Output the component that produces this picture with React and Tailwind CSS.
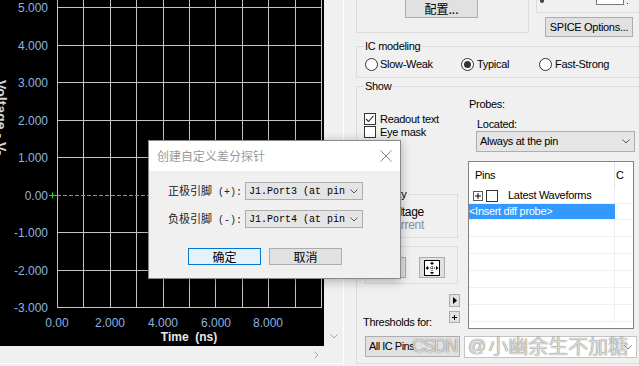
import React from "react";

const gridX = [57, 83, 110, 136, 163, 189, 215, 242, 268, 295, 321];
const gridY = [7, 45, 82, 120, 157, 232, 270, 307];
const yLabels = [
  [7, "5.000"],
  [45, "4.000"],
  [82, "3.000"],
  [120, "2.000"],
  [157, "1.000"],
  [195, "0.00"],
  [232, "-1.000"],
  [270, "-2.000"],
  [307, "-3.000"],
];
const xLabels = [
  [57, "0.00"],
  [110, "2.000"],
  [163, "4.000"],
  [216, "6.000"],
  [268, "8.000"],
];
const emptyRows = [1, 2, 3, 4, 5, 6];

function Chevron({ color = "#555", className = "" }) {
  return (
    <svg width="8" height="5" viewBox="0 0 8 5" className={className}>
      <path d="M0.5 0.5L4 4L7.5 0.5" fill="none" stroke={color} />
    </svg>
  );
}

function Radio({ checked, dim }) {
  return (
    <span
      className={`w-[13px] h-[13px] rounded-full border bg-white flex items-center justify-center shrink-0 ${
        dim ? "border-[#9a9a9a]" : "border-[#333]"
      }`}
    >
      {checked && <span className="w-[7px] h-[7px] rounded-full bg-[#333]" />}
    </span>
  );
}

function Check({ checked }) {
  return (
    <span className="w-[12px] h-[12px] border border-[#333] bg-white shrink-0 flex">
      {checked && (
        <svg width="10" height="10" viewBox="0 0 10 10">
          <path d="M1 5l2.5 2.5L8.5 1.8" fill="none" stroke="#333" strokeWidth="1.1" />
        </svg>
      )}
    </span>
  );
}

function Group({ label, labelLeft = "left-[7px]", className = "", children }) {
  return (
    <div className={`relative border border-[#dcdcdc] shrink-0 ${className}`}>
      {label && (
        <span className={`absolute -top-[8px] ${labelLeft} px-px bg-[#f0f0f0] leading-[14px] whitespace-nowrap`}>
          {label}
        </span>
      )}
      {children}
    </div>
  );
}

function Chart() {
  return (
    <svg
      width="324"
      height="346"
      className="block bg-black shrink-0"
      fontFamily="Liberation Sans, sans-serif"
      style={{ letterSpacing: 0 }}
    >
      {gridX.map((x) => (
        <line key={x} x1={x + 0.5} y1="0" x2={x + 0.5} y2="308" stroke="#c4c4c4" />
      ))}
      {gridY.map((y) => (
        <line key={y} x1="57" y1={y + 0.5} x2="322" y2={y + 0.5} stroke="#c4c4c4" />
      ))}
      <line x1="57" y1="195.5" x2="322" y2="195.5" stroke="#1ee61e" strokeDasharray="4 2" />
      <path d="M49 195.5H57M52.5 192.5V198.5" stroke="#1ee61e" />
      <g fill="#8db3e2" fontSize="12">
        {yLabels.map(([y, t]) => (
          <text key={t} x="48" y={y + 5} textAnchor="end">
            {t}
          </text>
        ))}
        {xLabels.map(([x, t]) => (
          <text key={t} x={x} y="326.5" textAnchor="middle">
            {t}
          </text>
        ))}
      </g>
      <text
        x="189"
        y="341"
        textAnchor="middle"
        fontSize="12"
        fontWeight="bold"
        fill="#e8e8e8"
        style={{ whiteSpace: "pre" }}
      >
        Time  (ns)
      </text>
      <text
        transform="translate(-4 80) rotate(90)"
        fontSize="14"
        fontWeight="bold"
        fill="#d4d4d4"
      >
        Voltage - V-
      </text>
    </svg>
  );
}

function FitIcon() {
  return (
    <svg width="16" height="16" viewBox="0 0 16 16">
      <rect x="0.5" y="0.5" width="15" height="15" fill="white" stroke="black" />
      <path d="M8 4V12M4 8H12" stroke="black" strokeDasharray="1 1" />
      <path d="M8 1.5L10 4H6Z M8 14.5L10 12H6Z M1.5 8L4 6V10Z M14.5 8L12 6V10Z" fill="black" />
    </svg>
  );
}

export default function App() {
  return (
    <div className="relative w-[639px] h-[366px] overflow-hidden bg-[#f0f0f0] flex font-['Liberation_Sans',sans-serif] text-[11px] tracking-[-0.3px] text-black">
      {/* Scope plot + scrollbars */}
      <div className="w-[343px] shrink-0 flex flex-col">
        <div className="flex h-[346px]">
          <Chart />
          <div className="w-[19px] flex flex-col justify-end items-center pb-[7px]">
            <Chevron color="#a6a6a6" />
          </div>
        </div>
        <div className="h-[18px] border-b border-white flex items-center justify-start pl-[314px]">
          <svg width="5" height="8" viewBox="0 0 5 8">
            <path d="M0.5 0.5L4 4L0.5 7.5" fill="none" stroke="#a6a6a6" />
          </svg>
        </div>
      </div>

      {/* Settings panel */}
      <div className="w-[296px] shrink-0 border-l border-white pl-[12px] flex flex-col overflow-hidden">
        <div className="h-[40px] flex items-start shrink-0">
          <div className="w-[173px] h-[33px] border-x border-b border-[#dcdcdc] flex items-start shrink-0">
            <button className="ml-[48px] -mt-px w-[73px] h-[19px] border border-[#adadad] bg-[#e1e1e1] text-[12px] font-['Noto_Sans_CJK_SC',sans-serif] tracking-normal leading-[16px]">
              配置...
            </button>
          </div>
          <div className="ml-[7px] flex flex-col shrink-0">
            <div className="h-[13px] w-[120px] border-l border-b border-[#dcdcdc] flex items-start">
              <span className="ml-[3px] w-[4px] h-[3px] rounded-b-full bg-[#444]" />
              <span className="ml-[52px] -mt-px w-[28px] h-[6px] border border-[#7a7a7a] bg-white" />
              <span className="ml-[3px] mt-[3px] w-[1px] h-[1px] bg-[#333]" />
            </div>
            <button className="mt-[4px] ml-[9px] w-[88px] h-[20px] border border-[#adadad] bg-[#e1e1e1] leading-[18px] whitespace-nowrap">
              SPICE Options...
            </button>
          </div>
        </div>

        <Group label="IC modeling" className="mt-[6px] h-[32px] w-[300px]">
          <div className="mt-[9px] pl-[8px] flex items-center">
            <div className="w-[96px] flex items-center shrink-0">
              <Radio />
              <span className="ml-[2px]">Slow-Weak</span>
            </div>
            <div className="w-[78px] flex items-center shrink-0">
              <Radio checked />
              <span className="ml-[3px]">Typical</span>
            </div>
            <div className="flex items-center shrink-0">
              <Radio />
              <span className="ml-[3px]">Fast-Strong</span>
            </div>
          </div>
        </Group>

        <Group label="Show" className="mt-[8px] h-[278px] w-[300px] flex flex-col">
          <div className="flex h-[242px] shrink-0">
            <div className="w-[111px] flex flex-col shrink-0">
              <div className="mt-[26px] pl-[7px] flex items-center h-[12px]">
                <Check checked />
                <span className="ml-[4px] whitespace-nowrap">Readout text</span>
              </div>
              <div className="mt-[1px] pl-[7px] flex items-center h-[12px]">
                <Check />
                <span className="ml-[4px] whitespace-nowrap">Eye mask</span>
              </div>
              <Group label="Quantity" labelLeft="left-[5px]" className="mt-[56px] ml-[4px] w-[97px] h-[44px]">
                <div className="mt-[10px] pl-[9px] flex flex-col text-[12px]">
                  <div className="flex items-center h-[13px]">
                    <Radio checked />
                    <span className="ml-[2px]">Voltage</span>
                  </div>
                  <div className="flex items-center h-[13px] text-[#8c8c8c]">
                    <Radio dim />
                    <span className="ml-[2px]">Current</span>
                  </div>
                </div>
              </Group>
              <Group className="mt-[8px] ml-[8px] w-[93px] h-[38px] flex items-start pt-[10px] pl-[9px]">
                <button className="w-[31px] h-[21px] border border-[#adadad] bg-[#e1e1e1] shrink-0" />
                <button className="ml-[13px] w-[26px] h-[21px] border border-[#adadad] bg-[#e1e1e1] flex items-center justify-center shrink-0">
                  <FitIcon />
                </button>
              </Group>
              <div className="mt-[10px] flex h-[35px]">
                <div className="w-[92px] pl-[6px] self-end leading-[14px] whitespace-nowrap shrink-0">
                  Thresholds for:
                </div>
                <div className="flex flex-col gap-[4px]">
                  <button className="w-[11px] h-[13px] border border-[#adadad] bg-[#e1e1e1] flex items-center justify-center">
                    <svg width="4" height="7" viewBox="0 0 4 7">
                      <path d="M0 0L4 3.5L0 7Z" fill="black" />
                    </svg>
                  </button>
                  <button className="w-[11px] h-[12px] border border-[#adadad] bg-[#e1e1e1] flex items-center justify-center">
                    <svg width="5" height="5" viewBox="0 0 5 5">
                      <path d="M2.5 0V5M0 2.5H5" stroke="black" />
                    </svg>
                  </button>
                </div>
              </div>
            </div>

            <div className="w-[167px] flex flex-col shrink-0">
              <div className="mt-[10px] pl-[1px] leading-[14px]">Probes:</div>
              <div className="mt-[6px] pl-[9px] leading-[14px]">Located:</div>
              <div className="ml-[8px] w-[159px] h-[21px] border border-[#adadad] bg-[#e5e5e5] flex items-center pl-[3px] pr-[4px] shrink-0">
                <span className="whitespace-nowrap">Always at the pin</span>
                <Chevron className="ml-auto" />
              </div>
              <div className="mt-[9px] w-[166px] h-[168px] border border-[#828282] bg-white flex flex-col overflow-hidden shrink-0">
                <div className="flex h-[26px] shrink-0">
                  <div className="w-[146px] pl-[6px] flex items-center border-r border-[#e3e3e3] shrink-0">Pins</div>
                  <div className="pl-[1px] flex items-center">C</div>
                </div>
                <div className="flex h-[16px] border-b border-[#f0f0f0] shrink-0">
                  <div className="w-[146px] flex items-center pl-[4px] border-r border-[#f0f0f0] shrink-0">
                    <span className="w-[10px] h-[10px] border border-[#5a5a5a] flex items-center justify-center shrink-0">
                      <svg width="6" height="6" viewBox="0 0 6 6">
                        <path d="M3 0V6M0 3H6" stroke="black" />
                      </svg>
                    </span>
                    <span className="ml-[3px]">
                      <Check />
                    </span>
                    <span className="ml-[10px] whitespace-nowrap">Latest Waveforms</span>
                  </div>
                </div>
                <div className="flex h-[16px] border-b border-[#f0f0f0] shrink-0">
                  <div className="w-[146px] bg-[#3399ff] text-white flex items-center whitespace-nowrap shrink-0">
                    &lt;Insert diff probe&gt;
                  </div>
                </div>
                {emptyRows.map((r) => (
                  <div key={r} className="flex h-[17px] border-b border-[#f0f0f0] shrink-0">
                    <div className="w-[146px] border-r border-[#f0f0f0] shrink-0" />
                  </div>
                ))}
              </div>
            </div>
          </div>

          <div className="mt-[7px] flex shrink-0">
            <div className="ml-[8px] w-[95px] h-[21px] border border-[#adadad] bg-[#e1e1e1] flex items-center pl-[3px] tracking-[-0.5px] whitespace-nowrap overflow-hidden shrink-0">
              All IC Pins
            </div>
            <div className="ml-[4px] w-[173px] h-[22px] border border-[#c4c4c4] bg-white flex items-center justify-end pr-[4px] shrink-0">
              <Chevron color="#777" />
            </div>
          </div>
        </Group>
      </div>

      {/* Dialog */}
      <div className="absolute left-[148px] top-[140px] w-[253px] h-[139px] border border-[#8a8a8a] bg-[#f0f0f0] shadow-[0_2px_10px_rgba(0,0,0,0.3)] flex flex-col">
        <div className="h-[30px] bg-white flex items-center pl-[8px] pr-[8px] shrink-0">
          <span className="text-[12px] text-[#9a9a9a] tracking-normal font-['Noto_Sans_CJK_SC',sans-serif]">
            创建自定义差分探针
          </span>
          <svg width="12" height="12" viewBox="0 0 12 12" className="ml-auto">
            <path d="M0.5 0.5L11.5 11.5M11.5 0.5L0.5 11.5" stroke="#8a8a8a" />
          </svg>
        </div>
        <div className="flex flex-col pl-[19px] pt-[11px] tracking-normal">
          <div className="flex items-center h-[18px]">
            <span className="w-[77px] whitespace-nowrap text-[#222] shrink-0">
              <span className="text-[11px] font-['Noto_Sans_CJK_SC',sans-serif]">正极引脚</span>
              <span className="text-[10px] font-['Liberation_Mono',monospace] whitespace-pre"> (+):</span>
            </span>
            <div className="w-[118px] h-[18px] border border-[#adadad] bg-[#e5e5e5] flex items-center pl-[3px] pr-[4px] shrink-0">
              <span className="text-[10px] font-['Liberation_Mono',monospace] whitespace-pre">J1.Port3 (at pin</span>
              <Chevron className="ml-auto" />
            </div>
          </div>
          <div className="mt-[10px] flex items-center h-[18px]">
            <span className="w-[77px] whitespace-nowrap text-[#222] shrink-0">
              <span className="text-[11px] font-['Noto_Sans_CJK_SC',sans-serif]">负极引脚</span>
              <span className="text-[10px] font-['Liberation_Mono',monospace] whitespace-pre"> (-):</span>
            </span>
            <div className="w-[118px] h-[18px] border border-[#adadad] bg-[#e5e5e5] flex items-center pl-[3px] pr-[4px] shrink-0">
              <span className="text-[10px] font-['Liberation_Mono',monospace] whitespace-pre">J1.Port4 (at pin</span>
              <Chevron className="ml-auto" />
            </div>
          </div>
          <div className="mt-[20px] pl-[20px] flex gap-[8px]">
            <button className="w-[73px] h-[17px] border border-[#0078d7] bg-[#e5f1fb] text-[12px] leading-[15px] font-['Noto_Sans_CJK_SC',sans-serif]">
              确定
            </button>
            <button className="w-[73px] h-[17px] border border-[#adadad] bg-[#e1e1e1] text-[12px] leading-[15px] font-['Noto_Sans_CJK_SC',sans-serif]">
              取消
            </button>
          </div>
        </div>
      </div>

      {/* Watermark */}
      <div className="absolute left-[412px] top-[335px] flex items-center h-[22px] leading-[22px] text-[18px] text-[rgba(232,232,232,0.92)] [text-shadow:0_0_1px_rgba(0,0,0,0.75)] tracking-normal whitespace-nowrap">
        <span className="tracking-[-1.5px]">CSDN</span>
        <span className="ml-[11px]">@</span>
        <span className="ml-[2px] text-[20px] font-['Noto_Sans_CJK_SC',sans-serif]">小幽余生不加糖</span>
      </div>
    </div>
  );
}
